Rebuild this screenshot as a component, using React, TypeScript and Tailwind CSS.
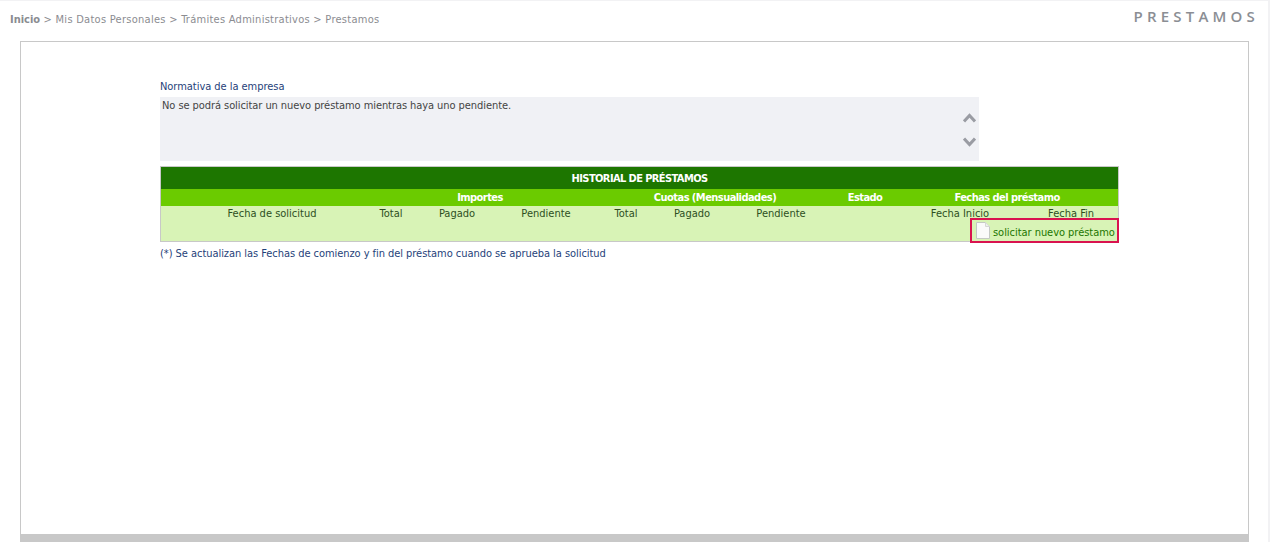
const font = { fontFamily: '"DejaVu Sans Condensed", "DejaVu Sans", sans-serif' };

const columnWidths = [203, 54, 78, 100, 60, 72, 106, 62, 128, 94];
const columnNames = ["Fecha de solicitud", "Total", "Pagado", "Pendiente", "Total", "Pagado", "Pendiente", "", "Fecha Inicio", "Fecha Fin"];

function PageIcon() {
  return (
    <svg width="14" height="17" viewBox="0 0 14 17" className="shrink-0">
      <path d="M0.5 0.5H9.5L13.5 4.5V16.5H0.5Z" fill="#fafafa" stroke="#c4c8c4" />
      <path d="M9.5 0.5V4.5H13.5" fill="#eeeeee" stroke="#d4d8d4" />
    </svg>
  );
}

function Arrow({ up }: { up?: boolean }) {
  return (
    <svg width="13" height="10" viewBox="0 0 13 10">
      <path d={up ? "M1 8.5L6.5 2.5L12 8.5" : "M1 1.5L6.5 7.5L12 1.5"} fill="none" stroke="#9a9ca3" strokeWidth="3" />
    </svg>
  );
}

export default function App() {
  return (
    <div className="h-[542px] w-[1270px] overflow-hidden bg-white flex flex-col border-t border-r-2 border-[#f2f2f4] text-[11px] leading-[13px]" style={font}>
      <div className="flex h-10 shrink-0 justify-between pl-[10px] pr-[9px]">
        <div className="pt-[12px] text-[#8b8c91] tracking-[0.27px]">
          <span className="font-bold tracking-normal">Inicio</span> &gt; Mis Datos Personales &gt; Trámites Administrativos &gt; Prestamos
        </div>
        <div className="pt-[6px] text-[15px] leading-[18px] tracking-[4.2px] font-semibold text-[#8b8e94] font-['Open_Sans']">PRESTAMOS</div>
      </div>

      <div className="ml-5 flex w-[1229px] flex-1 flex-col border-x border-t border-[#c8c8c8] pl-[139px] pt-[38px]">
        <div className="text-[#1f3f7a] h-[17px] tracking-[-0.04px]">Normativa de la empresa</div>
        <div className="flex h-[64px] w-[819px] justify-between bg-[#f0f1f5] pl-[2px] pr-[3px] pt-[2px] text-[#444444]">
          <div className="tracking-[-0.07px]">No se podrá solicitar un nuevo préstamo mientras haya uno pendiente.</div>
          <div className="flex flex-col gap-[14px] pt-[14px]">
            <Arrow up />
            <Arrow />
          </div>
        </div>

        <div className="relative mt-[5px] w-[959px] border border-[#c8c8c8] bg-[#d8f3b6]">
          <table className="w-[957px] table-fixed border-collapse text-center">
            <colgroup>
              {columnWidths.map((w, i) => (
                <col key={i} style={{ width: w }} />
              ))}
            </colgroup>
            <thead>
              <tr className="h-[22px] bg-[#1d7600] font-bold text-white tracking-[-0.6px]">
                <th colSpan={10}>HISTORIAL DE PRÉSTAMOS</th>
              </tr>
              <tr className="h-[17px] bg-[#6bcb00] font-bold text-white tracking-[-0.55px]">
                <th></th>
                <th colSpan={3}>Importes</th>
                <th colSpan={3}>Cuotas (Mensualidades)</th>
                <th>Estado</th>
                <th colSpan={2}>Fechas del préstamo</th>
              </tr>
              <tr className="h-[15px] font-normal text-[#2d4f1e]">
                {columnNames.map((name, i) => (
                  <th key={i} className={i === 0 ? "pl-[19px] font-normal" : "font-normal"}>
                    {name}
                  </th>
                ))}
              </tr>
            </thead>
          </table>
          <div className="h-[20px]"></div>
          <div className="absolute right-[-1px] top-[51px] flex h-[25px] w-[149px] items-center gap-[3px] border-2 border-[#d9134f] pl-[4px] text-[#1d7600]">
            <PageIcon />
            <span className="whitespace-nowrap pt-[3px] tracking-[-0.04px]">solicitar nuevo préstamo</span>
          </div>
        </div>

        <div className="mt-[5px] text-[#1f3f7a] tracking-[-0.05px]">(*) Se actualizan las Fechas de comienzo y fin del préstamo cuando se aprueba la solicitud</div>
      </div>
      <div className="ml-5 h-2 w-[1229px] shrink-0 bg-[#c8c8c8]"></div>
    </div>
  );
}
